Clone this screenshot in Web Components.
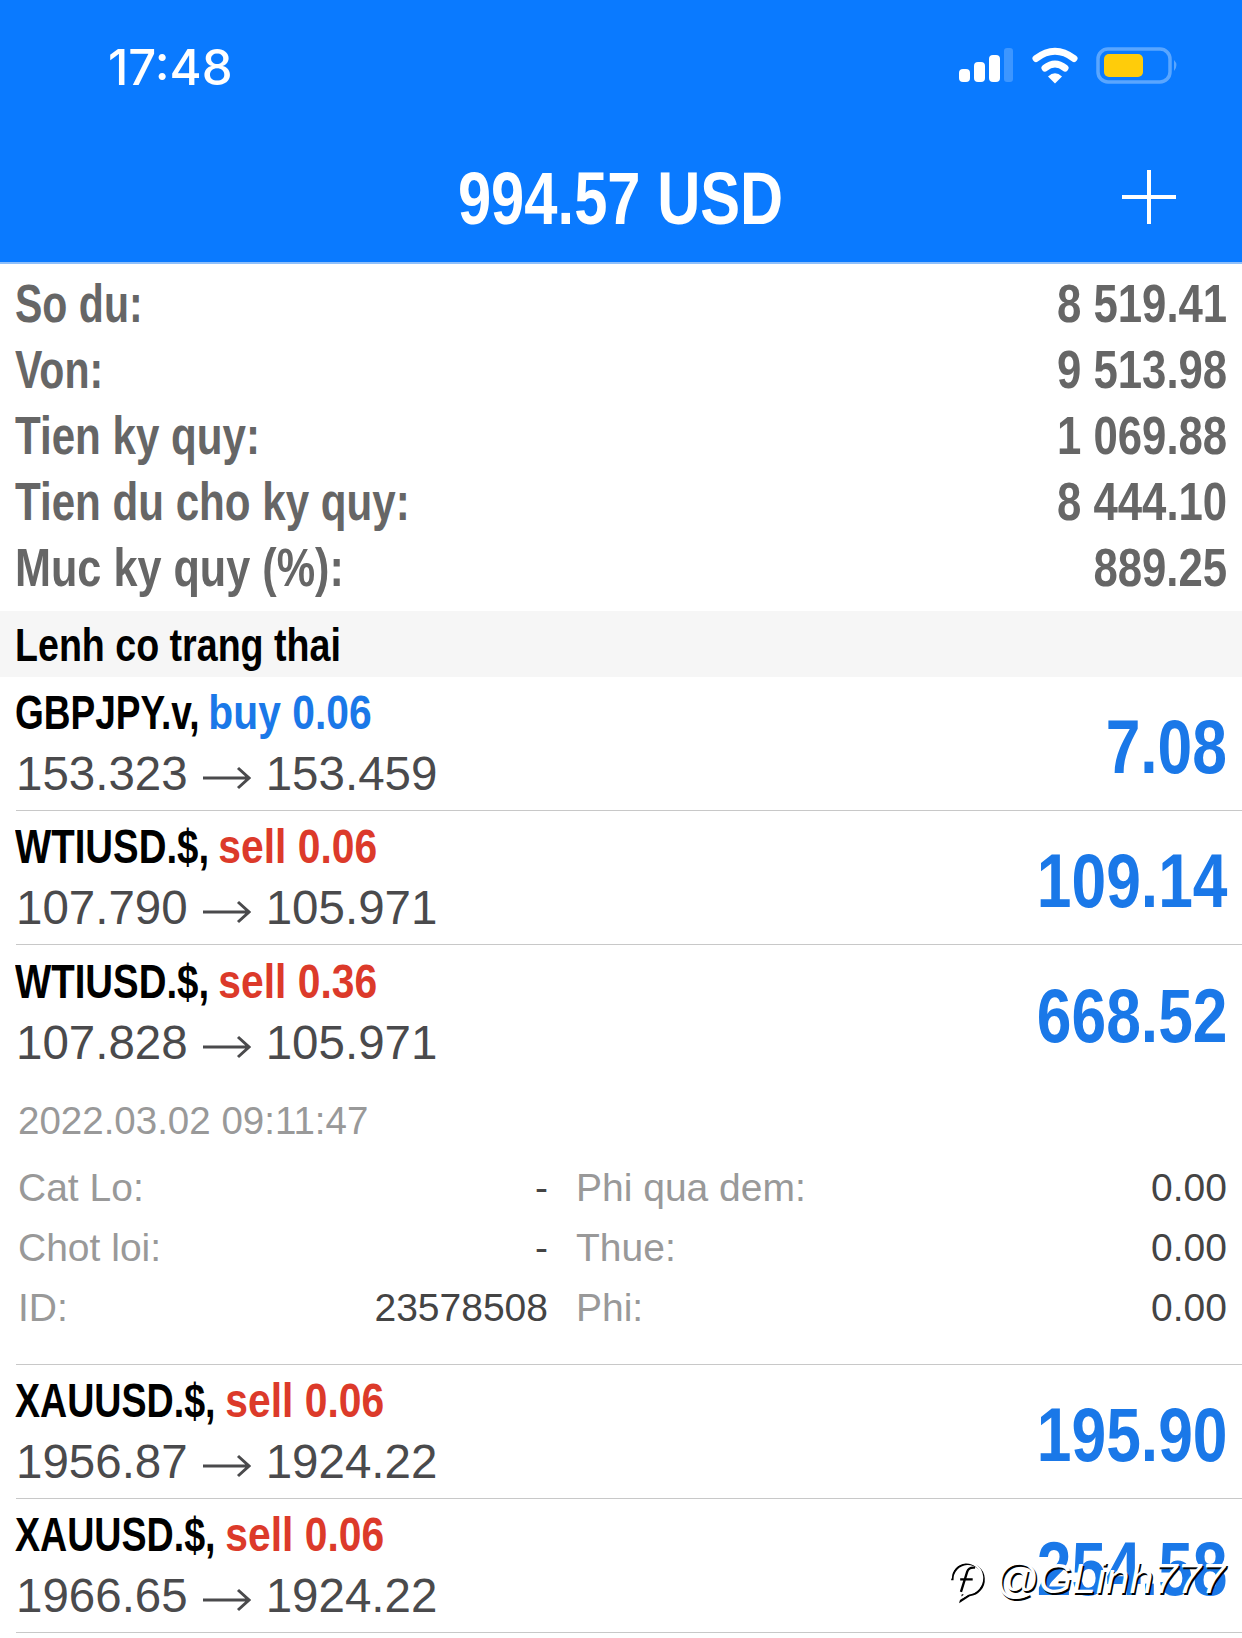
<!DOCTYPE html>
<html>
<head>
<meta charset="UTF-8">
<style>
  html, body { margin: 0; background: #fff; }
  body { width: 1242px; height: 1638px; overflow: hidden; position: relative; font-family: "Liberation Sans", Arial, sans-serif; }
</style>
</head>
<body>
<top-bar time="17:48" title="994.57 USD"></top-bar>
<account-summary>
  <summary-row label="So du:" value="8 519.41" style="--lx:.76"></summary-row>
  <summary-row label="Von:" value="9 513.98" style="--lx:.76"></summary-row>
  <summary-row label="Tien ky quy:" value="1 069.88"></summary-row>
  <summary-row label="Tien du cho ky quy:" value="8 444.10"></summary-row>
  <summary-row label="Muc ky quy (%):" value="889.25" style="--lx:.8"></summary-row>
</account-summary>
<section-title>Lenh co trang thai</section-title>
<order-row symbol="GBPJPY.v," sx=".771" side="buy" lots="0.06" from="153.323" to="153.459" profit="7.08"></order-row>
<order-row symbol="WTIUSD.$," sx=".8" side="sell" lots="0.06" from="107.790" to="105.971" profit="109.14"></order-row>
<order-row symbol="WTIUSD.$," sx=".8" side="sell" lots="0.36" from="107.828" to="105.971" profit="668.52" flat></order-row>
<order-details time="2022.03.02 09:11:47">
  <detail-cell label="Cat Lo:" value="-"></detail-cell>
  <detail-cell label="Phi qua dem:" value="0.00"></detail-cell>
  <detail-cell label="Chot loi:" value="-"></detail-cell>
  <detail-cell label="Thue:" value="0.00"></detail-cell>
  <detail-cell label="ID:" value="23578508"></detail-cell>
  <detail-cell label="Phi:" value="0.00"></detail-cell>
</order-details>
<order-row symbol="XAUUSD.$," sx=".783" side="sell" lots="0.06" from="1956.87" to="1924.22" profit="195.90"></order-row>
<order-row symbol="XAUUSD.$," sx=".783" side="sell" lots="0.06" from="1966.65" to="1924.22" profit="254.58"></order-row>
<water-mark>@GLinh777</water-mark>

<script>
// No condensed face is installed, so bold text is squeezed horizontally.
// The margin gives back the width the transform takes away.
function squeeze(el, sx, origin = "left") {
  const width = el.getBoundingClientRect().width;
  el.style.transformOrigin = origin;
  el.style.transform = `scaleX(${sx})`;
  el.style[origin === "left" ? "marginRight" : "marginLeft"] = `${-width * (1 - sx)}px`;
}

class TopBar extends HTMLElement {
  connectedCallback() {
    this.attachShadow({ mode: "open" }).innerHTML = `
      <style>
        :host { display: block; height: 262px; background: #0a7aff; color: #fff; border-bottom: 2px solid #8fc0fb; }
        .status { display: flex; justify-content: space-between; align-items: center; height: 134px; padding: 0 62px 0 108px; }
        .time { font: 500 49px Inter, sans-serif; }
        .nav { display: flex; justify-content: center; align-items: center; height: 128px; position: relative; }
        h1 { margin: 0; font: bold 74px "Liberation Sans", sans-serif; display: inline-block; transform: scaleX(.807); white-space: nowrap; }
        svg { display: block; }
        .plus { position: absolute; right: 65px; top: 35px; }
      </style>
      <div class="status">
        <span class="time">${this.getAttribute("time")}</span>
        <svg width="222" height="40" viewBox="0 0 222 40">
          <rect x="1" y="22" width="11" height="13" rx="4" fill="#fff"/>
          <rect x="16" y="15" width="11" height="20" rx="4" fill="#fff"/>
          <rect x="31" y="8" width="11" height="27" rx="4" fill="#fff"/>
          <rect x="46" y="1" width="9" height="34" rx="3" fill="#3d96ff"/>
          <path d="M78 11.5Q97-3 116 11.5" fill="none" stroke="#fff" stroke-width="7" stroke-linecap="round"/>
          <path d="M87 21Q97 13 107 21" fill="none" stroke="#fff" stroke-width="7" stroke-linecap="round"/>
          <path d="M90 29.5Q97 23 104 29.5L97 36.5Z" fill="#fff"/>
          <rect x="140" y="2" width="72" height="33" rx="10" fill="none" stroke="#5aa6ff" stroke-width="3.5"/>
          <rect x="146" y="7" width="39" height="23" rx="5" fill="#ffcc0a"/>
          <path d="M216 13Q221 18 216 24Z" fill="#5aa6ff"/>
        </svg>
      </div>
      <div class="nav">
        <h1>${this.getAttribute("title")}</h1>
        <svg class="plus" width="56" height="56" viewBox="0 0 56 56"><path d="M28 1V55M1 28H55" stroke="#fff" stroke-width="4" fill="none"/></svg>
      </div>`;
  }
}

class AccountSummary extends HTMLElement {
  constructor() {
    super();
    this.attachShadow({ mode: "open" }).innerHTML = `
      <style>:host { display: block; padding: 6px 15px 0 15px; height: 347px; box-sizing: border-box; }</style>
      <slot></slot>`;
  }
}

class SummaryRow extends HTMLElement {
  connectedCallback() {
    this.attachShadow({ mode: "open" }).innerHTML = `
      <style>
        :host { display: flex; justify-content: space-between; align-items: center; height: 66px; font: bold 54px "Liberation Sans", sans-serif; color: #666; }
        span { display: inline-block; white-space: nowrap; }
        .l { transform: scaleX(var(--lx, .78)); transform-origin: left; }
        .v { transform: scaleX(.81); transform-origin: right; }
      </style>
      <span class="l">${this.getAttribute("label")}</span><span class="v">${this.getAttribute("value")}</span>`;
  }
}

class SectionTitle extends HTMLElement {
  constructor() {
    super();
    this.attachShadow({ mode: "open" }).innerHTML = `
      <style>
        :host { display: flex; align-items: center; height: 66px; padding-left: 15px; background: #f6f6f6; font: bold 47px "Liberation Sans", sans-serif; color: #000; }
        span { display: inline-block; transform: scaleX(.8); transform-origin: left; white-space: nowrap; }
      </style>
      <span><slot></slot></span>`;
  }
}

class OrderRow extends HTMLElement {
  connectedCallback() {
    const side = this.getAttribute("side");
    this.attachShadow({ mode: "open" }).innerHTML = `
      <style>
        :host { display: block; padding-left: 16px; }
        .row { display: flex; justify-content: space-between; align-items: center; height: 134px; padding-right: 15px; box-sizing: border-box; border-bottom: 1px solid #c8c8c8; }
        :host([flat]) .row { border-bottom: 0; height: 135px; }
        .head { font: bold 48px/60px "Liberation Sans", sans-serif; color: #000; white-space: nowrap; display: flex; }
        .head span { display: inline-block; }
        .symbol { margin-left: -1px; }
        .side { padding-left: 11px; }
        .buy { color: #1a78e8; }
        .sell { color: #dc3a2a; }
        .price { font: 47.5px/62px "Liberation Sans", sans-serif; color: #4a4a4c; white-space: nowrap; }
        .arrow { display: inline-block; vertical-align: -1px; margin: 0 15px; }
        .profit { font: bold 76px "Liberation Sans", sans-serif; color: #1a78e8; padding-top: 6px; }
        .profit span { display: inline-block; transform: scaleX(.82); transform-origin: right; }
      </style>
      <div class="row">
        <div>
          <div class="head"><span class="symbol">${this.getAttribute("symbol")}</span><span class="side ${side}">${side} ${this.getAttribute("lots")}</span></div>
          <div class="price">${this.getAttribute("from")}<svg class="arrow" width="48" height="26" viewBox="0 0 48 26"><path d="M0 13H46M35 3L46 13L35 23" fill="none" stroke="#4a4a4c" stroke-width="3"/></svg>${this.getAttribute("to")}</div>
        </div>
        <div class="profit"><span>${this.getAttribute("profit")}</span></div>
      </div>`;
    squeeze(this.shadowRoot.querySelector(".symbol"), parseFloat(this.getAttribute("sx")));
    squeeze(this.shadowRoot.querySelector(".side"), 0.85);
  }
}

class OrderDetails extends HTMLElement {
  connectedCallback() {
    this.attachShadow({ mode: "open" }).innerHTML = `
      <style>
        :host { display: block; margin-left: 16px; height: 285px; padding: 0 15px 0 2px; box-sizing: border-box; border-bottom: 1px solid #c8c8c8; }
        .time { font: 38.5px/60px "Liberation Sans", sans-serif; color: #999; padding-top: 11px; }
        .grid { display: grid; grid-template-columns: 530px 1fr; column-gap: 28px; margin-top: 7px; }
      </style>
      <div class="time">${this.getAttribute("time")}</div>
      <div class="grid"><slot></slot></div>`;
  }
}

class DetailCell extends HTMLElement {
  connectedCallback() {
    this.attachShadow({ mode: "open" }).innerHTML = `
      <style>
        :host { display: flex; justify-content: space-between; align-items: center; height: 60px; font: 39px "Liberation Sans", sans-serif; color: #999; }
        b { font-weight: normal; color: #444; }
      </style>
      <span>${this.getAttribute("label")}</span><b>${this.getAttribute("value")}</b>`;
  }
}

class WaterMark extends HTMLElement {
  constructor() {
    super();
    this.attachShadow({ mode: "open" }).innerHTML = `
      <style>
        :host { position: absolute; left: 950px; top: 1552px; display: flex; align-items: center; gap: 9px; color: #fff; font: italic 43px "Liberation Sans", sans-serif; text-shadow: 1.5px 1.5px 0 #000; }
      </style>
      <svg width="36" height="46" viewBox="0 0 46 52" style="margin-top:6px">
        <path d="M3 25A20 20 0 1 1 25 44L14 51L16 43" fill="none" stroke="#000" stroke-width="3"/>
        <path d="M1 23A20 20 0 1 1 23 42L12 49L14 41" fill="none" stroke="#fff" stroke-width="3"/>
        <path d="M14 40L22 14Q24 8 32 9M13 24H29" fill="none" stroke="#000" stroke-width="3"/>
      </svg>
      <slot></slot>`;
  }
}

customElements.define("top-bar", TopBar);
customElements.define("account-summary", AccountSummary);
customElements.define("summary-row", SummaryRow);
customElements.define("section-title", SectionTitle);
customElements.define("order-row", OrderRow);
customElements.define("order-details", OrderDetails);
customElements.define("detail-cell", DetailCell);
customElements.define("water-mark", WaterMark);
</script>
</body>
</html>
